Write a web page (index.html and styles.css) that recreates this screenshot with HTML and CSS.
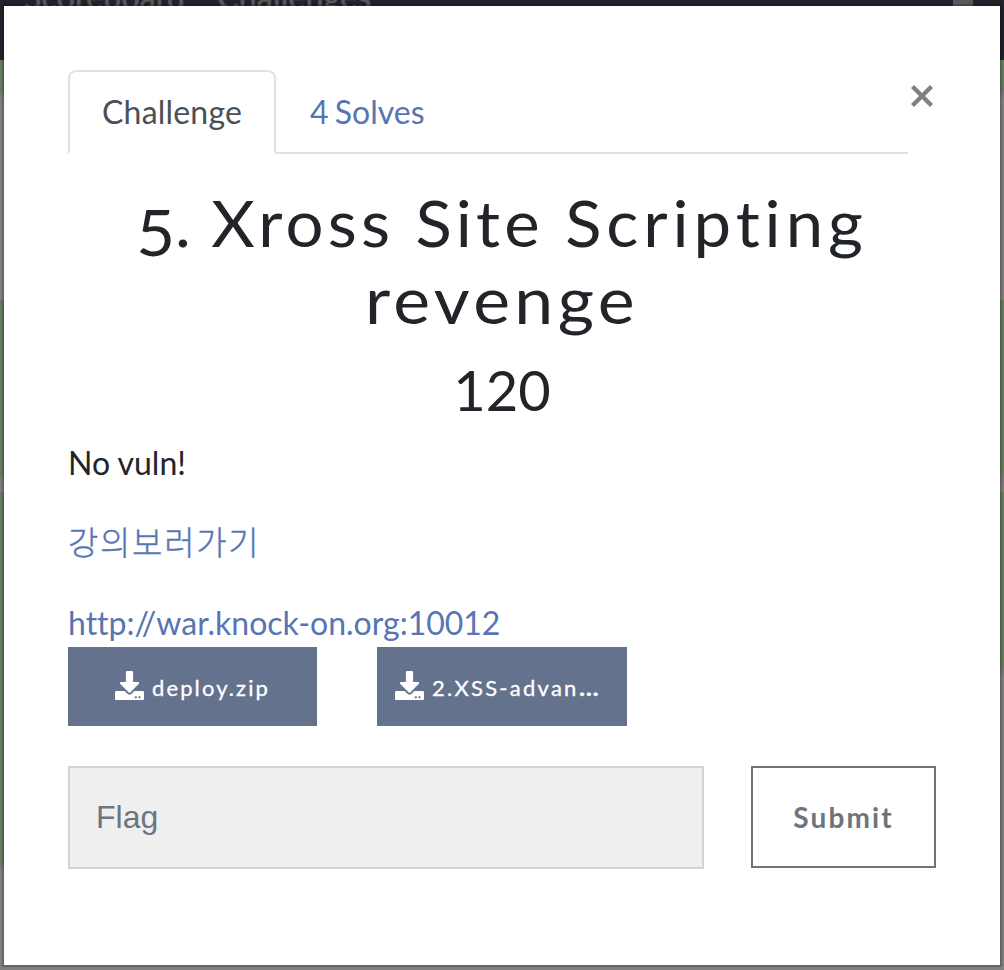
FILE: index.html
```html
<!DOCTYPE html>
<html lang="ko">
<head>
<meta charset="utf-8">
<title>5. Xross Site Scripting revenge</title>
<link rel="stylesheet" href="styles.css">
</head>
<body>
<nav class="navbar"><span>Scoreboard</span><span>Challenges</span><i class="nav-mark"></i></nav>
<div class="page"><div class="edge edge-left"></div><div class="edge edge-right"></div></div>
<main class="modal">
  <header class="head">
    <div class="tabs">
      <a class="tab active">Challenge</a>
      <a class="tab">4 Solves</a>
    </div>
    <button class="close" aria-label="Close"><svg viewBox="0 0 22 22" width="22" height="22"><path d="M1.5 1.5L20.5 20.5M20.5 1.5L1.5 20.5"/></svg></button>
  </header>
  <h2 class="title"><span class="line"><span class="low">5</span><span class="dot">. </span>Xross Site <span class="wide">Scripting</span></span><span class="line rev">revenge</span></h2>
  <h3 class="value">120</h3>
  <p class="desc">No vuln!</p>
  <p class="desc link ko">강의보러가기</p>
  <p class="desc link">http://war.knock-on.org:10012</p>
  <div class="files">
    <a class="file"><svg class="dl" viewBox="0 0 512 512"><path d="M216 0h80c13.3 0 24 10.7 24 24v168h87.7c17.8 0 26.7 21.5 14.1 34.1L269.7 378.3c-7.5 7.5-19.8 7.5-27.3 0L90.1 226.1c-12.6-12.6-3.7-34.1 14.1-34.1H192V24c0-13.3 10.7-24 24-24zm296 376v112c0 13.3-10.7 24-24 24H24c-13.3 0-24-10.7-24-24V376c0-13.3 10.7-24 24-24h146.7l49 49c20.1 20.1 52.5 20.1 72.6 0l49-49H488c13.3 0 24 10.7 24 24zm-124 88c0-11-9-20-20-20s-20 9-20 20 9 20 20 20 20-9 20-20zm64 0c0-11-9-20-20-20s-20 9-20 20 9 20 20 20 20-9 20-20z"/></svg><span>deploy.zip</span></a>
    <a class="file second"><svg class="dl" viewBox="0 0 512 512"><path d="M216 0h80c13.3 0 24 10.7 24 24v168h87.7c17.8 0 26.7 21.5 14.1 34.1L269.7 378.3c-7.5 7.5-19.8 7.5-27.3 0L90.1 226.1c-12.6-12.6-3.7-34.1 14.1-34.1H192V24c0-13.3 10.7-24 24-24zm296 376v112c0 13.3-10.7 24-24 24H24c-13.3 0-24-10.7-24-24V376c0-13.3 10.7-24 24-24h146.7l49 49c20.1 20.1 52.5 20.1 72.6 0l49-49H488c13.3 0 24 10.7 24 24zm-124 88c0-11-9-20-20-20s-20 9-20 20 9 20 20 20 20-9 20-20zm64 0c0-11-9-20-20-20s-20 9-20 20 9 20 20 20 20-9 20-20z"/></svg><span>2.XSS-advan<b class="more">…</b></span></a>
  </div>
  <div class="form">
    <input class="flag" type="text" placeholder="Flag">
    <button class="submit">Submit</button>
  </div>
</main>
</body>
</html>
```
FILE: styles.css
```css
* { box-sizing: border-box; }
body {
  margin: 0;
  width: 1004px;
  height: 970px;
  overflow: hidden;
  position: relative;
  display: flex;
  flex-direction: column;
  background: #7f7f7f;
  font-family: Lato, "Noto Sans CJK KR", sans-serif;
  font-size: 32px;
  font-variant-ligatures: none;
  color: #212529;
}
.navbar {
  height: 60px;
  background: #22222d;
  color: #58585b;
  display: flex;
  gap: 32px;
  padding-left: 24px;
  line-height: 40px;
  letter-spacing: .2px;
}
.navbar span { margin-top: -23px; -webkit-text-stroke: .7px #58585b; }
.nav-mark { width: 20px; height: 6px; margin-left: auto; margin-right: 31px; background: #58585b; }
.page { flex: 1; display: flex; justify-content: space-between; }
.edge { width: 6px; }
.edge-left { background: linear-gradient(#647c5d 0 29px, #6f6f6f 29px, #7f7f7f 40px 240px, #647c5d 240px 415px, #747474 415px, #7f7f7f 432px, #647c5d 432px 800px, #6f6f6f 800px, #7f7f7f 812px); }
.edge-right { background: linear-gradient(#647c5d 0 29px, #6f6f6f 29px, #7f7f7f 40px 240px, #647c5d 240px 415px, #747474 415px, #7f7f7f 432px, #647c5d 432px 607px, #6f6f6f 607px, #7f7f7f 619px); }
.modal {
  position: absolute;
  left: 2px;
  top: 4px;
  width: 1000px;
  height: 963px;
  border: 2px solid rgba(0, 0, 0, .2);
  background: #fff;
  background-clip: padding-box;
  padding: 64px;
}
.head { display: flex; }
.tabs {
  display: flex;
  width: 840px;
  height: 84px;
  border-bottom: 2px solid #dee2e6;
}
.tab {
  height: 84px;
  padding: 16px 32px;
  border: 2px solid transparent;
  line-height: 48px;
  color: #5775b4;
  word-spacing: -2px;
}
.tab.active {
  width: 208px;
  border-color: #dee2e6 #dee2e6 #fff;
  border-radius: 8px 8px 0 0;
  background: #fff;
  color: #495057;
  letter-spacing: .2px;
}
.close {
  margin: 15px 0 0 3px;
  padding: 0;
  width: 22px;
  height: 22px;
  border: 0;
  background: none;
}
.close svg { display: block; }
.close path { stroke: #808080; stroke-width: 4.4; }
.title {
  margin: 30px 0 0;
  font-size: 64px;
  font-weight: 400;
  line-height: 77px;
  text-align: center;
  letter-spacing: 4px;
  white-space: nowrap;
}
.line { display: block; transform: scaleX(1.048); }
.line.rev { transform: scaleX(1.09); }
.low { display: inline-block; line-height: 60px; vertical-align: -9px; height: 60px; margin-bottom: -9px; }
.dot { letter-spacing: 1.5px; margin-left: -4px; }
.wide { letter-spacing: 4.7px; }
.value {
  margin: 18px 0 0;
  font-size: 56px;
  font-weight: 400;
  line-height: 67px;
  text-align: center;
}
.desc { margin: 16px 0 32px; line-height: 48px; }
.desc + .desc { margin-top: 0; }
.link { color: #5775b4; }
.desc.ko {
  margin: -2px 0 34px;
  font-family: "Noto Sans CJK KR", sans-serif;
  font-weight: 300;
  font-size: 33px;
  letter-spacing: 1.7px;
  -webkit-text-stroke: .4px #5775b4;
}
.files { display: flex; gap: 60px; margin-top: -32px; }
.file {
  width: 249px;
  height: 79px;
  display: flex;
  align-items: center;
  justify-content: center;
  gap: 8px;
  padding-top: 3px;
  background: #65728d;
  color: #fff;
  font-size: 22px;
  letter-spacing: 2.1px;
}
.file span { margin-top: -2px; -webkit-text-stroke: .3px #fff; }
.file.second { width: 250px; justify-content: flex-start; padding-left: 18px; }
.more { display: inline-block; transform: scaleX(1.16); transform-origin: left; }
.file.second span { letter-spacing: 2.25px; }
.dl { width: 29px; height: 29px; fill: #fff; margin-top: -6px; }
.form { display: flex; justify-content: space-between; align-items: flex-start; margin-top: 40px; }
.flag {
  width: 636px;
  height: 103px;
  padding: 0 26px;
  border: 2px solid #ced4da;
  background: #efefef;
  font: 32px "Liberation Sans", sans-serif;
}
.flag::placeholder { color: #6c757d; opacity: 1; }
.submit {
  width: 185px;
  height: 102px;
  padding: 0;
  border: 2px solid #6c757d;
  background: #fff;
  color: #6c757d;
  font: 700 28px Lato, sans-serif;
  letter-spacing: 2.1px;
}
```
